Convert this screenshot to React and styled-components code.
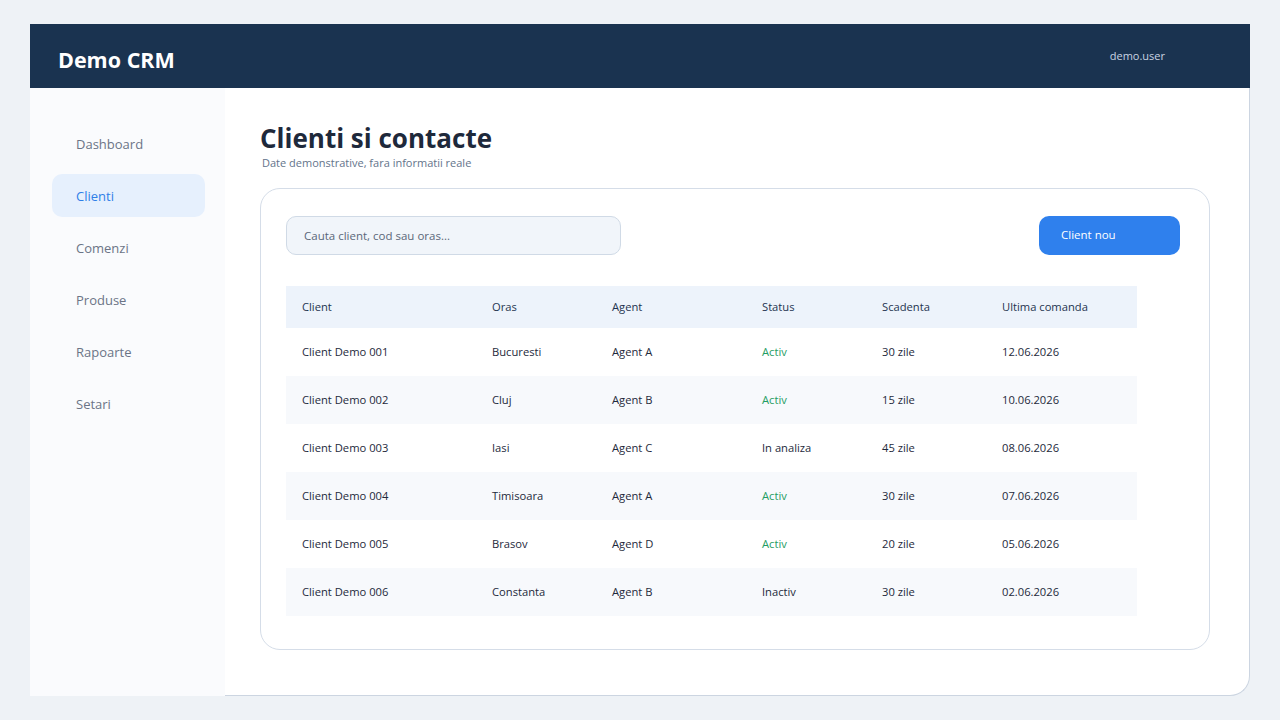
import styled, { createGlobalStyle } from "styled-components";

const GlobalStyle = createGlobalStyle`
    * { box-sizing: border-box; }
    body {
        margin: 0;
        background-color: #eef2f6;
        font-family: "Open Sans", "Noto Sans", sans-serif;
    }
`

const menu = ["Dashboard", "Clienti", "Comenzi", "Produse", "Rapoarte", "Setari"];

const clients = [
    { name: "Client Demo 001", city: "Bucuresti", agent: "Agent A", status: "Activ", due: "30 zile", last: "12.06.2026" },
    { name: "Client Demo 002", city: "Cluj", agent: "Agent B", status: "Activ", due: "15 zile", last: "10.06.2026" },
    { name: "Client Demo 003", city: "Iasi", agent: "Agent C", status: "In analiza", due: "45 zile", last: "08.06.2026" },
    { name: "Client Demo 004", city: "Timisoara", agent: "Agent A", status: "Activ", due: "30 zile", last: "07.06.2026" },
    { name: "Client Demo 005", city: "Brasov", agent: "Agent D", status: "Activ", due: "20 zile", last: "05.06.2026" },
    { name: "Client Demo 006", city: "Constanta", agent: "Agent B", status: "Inactiv", due: "30 zile", last: "02.06.2026" },
];

export default function App(){
    return(
        <>
            <GlobalStyle />
            <Frame>
                <Header>
                    <h1>Demo CRM</h1>
                    <span>demo.user</span>
                </Header>
                <Sidebar>
                    {menu.map(item => (
                        <MenuItem key={item} active={item === "Clienti"}>{item}</MenuItem>
                    ))}
                </Sidebar>
                <Main>
                    <Title>Clienti si contacte</Title>
                    <Subtitle>Date demonstrative, fara informatii reale</Subtitle>
                    <Card>
                        <Toolbar>
                            <Search placeholder="Cauta client, cod sau oras..." />
                            <Button>Client nou</Button>
                        </Toolbar>
                        <Table>
                            <thead>
                                <tr>
                                    <Th width="190">Client</Th>
                                    <Th width="120">Oras</Th>
                                    <Th width="150">Agent</Th>
                                    <Th width="120">Status</Th>
                                    <Th width="120">Scadenta</Th>
                                    <Th>Ultima comanda</Th>
                                </tr>
                            </thead>
                            <tbody>
                                {clients.map(c => (
                                    <Row key={c.name}>
                                        <Td>{c.name}</Td>
                                        <Td>{c.city}</Td>
                                        <Td>{c.agent}</Td>
                                        <Td green={c.status === "Activ"}>{c.status}</Td>
                                        <Td>{c.due}</Td>
                                        <Td>{c.last}</Td>
                                    </Row>
                                ))}
                            </tbody>
                        </Table>
                    </Card>
                </Main>
            </Frame>
        </>
    )
}

const Frame = styled.div`
    margin: 24px 30px;
    width: 1220px;
    height: 672px;
    display: grid;
    grid-template-columns: 195px 1fr;
    grid-template-rows: 64px 1fr;
`

const Header = styled.div`
    grid-column: 1 / 3;
    background-color: #1a3350;
    display: flex;
    align-items: center;
    justify-content: space-between;
    padding: 0 85px 0 28px;

    h1{
        margin: 0;
        font-size: 21.5px;
        font-weight: 700;
        color: #FFFFFF;
        position: relative;
        top: 3px;
    }

    span{
        font-size: 11px;
        color: #c9d4e2;
        position: relative;
        top: -1px;
    }
`

const Sidebar = styled.div`
    background-color: #fafbfd;
    padding: 34px 20px 0 22px;
    display: flex;
    flex-direction: column;
    gap: 9px;
`

const MenuItem = styled.div`
    height: 43px;
    display: flex;
    align-items: center;
    padding-left: 24px;
    border-radius: 10px;
    font-size: 13px;
    color: ${p => p.active ? "#2f7fe8" : "#6b7486"};
    background-color: ${p => p.active ? "#e6f0fd" : "transparent"};
`

const Main = styled.div`
    background-color: #FFFFFF;
    border-right: 1px solid #ccd5e1;
    border-bottom: 1px solid #ccd5e1;
    border-bottom-right-radius: 20px;
    padding: 32px 39px 0 35px;
`

const Title = styled.h2`
    margin: 0;
    font-size: 26px;
    line-height: 36px;
    font-weight: 700;
    color: #1e293b;
`

const Subtitle = styled.p`
    margin: 0 0 18px 2px;
    font-size: 11px;
    line-height: 14px;
    color: #64748b;
`

const Card = styled.div`
    border: 1px solid #d5dde8;
    border-radius: 20px;
    padding: 27px 29px 33px 25px;
`

const Toolbar = styled.div`
    display: flex;
    justify-content: space-between;
    align-items: center;
    margin-bottom: 31px;
`

const Search = styled.input`
    width: 335px;
    height: 39px;
    border: 1px solid #d0dae6;
    border-radius: 10px;
    background-color: #f1f5fa;
    padding: 0 17px;
    font-family: inherit;
    font-size: 11.5px;
    outline: none;

    &::placeholder{
        color: #5b6779;
    }
`

const Button = styled.button`
    width: 141px;
    height: 39px;
    border: none;
    border-radius: 10px;
    background-color: #2f80ed;
    color: #FFFFFF;
    font-family: inherit;
    font-size: 11.5px;
    text-align: left;
    padding: 0 22px 2px;
`

const Table = styled.table`
    width: 851px;
    border-collapse: collapse;
    table-layout: fixed;
    font-size: 11.2px;
`

const Th = styled.th`
    width: ${p => p.width ? p.width + "px" : "auto"};
    height: 42px;
    background-color: #edf3fb;
    text-align: left;
    font-weight: 400;
    color: #1e3350;
    padding: 0 16px 2px;
`

const Row = styled.tr`
    height: 48px;

    &:nth-child(even){
        background-color: #f7f9fc;
    }

    td{
        padding-bottom: 2px;
    }
`

const Td = styled.td`
    padding: 0 16px;
    color: ${p => p.green ? "#1f9d63" : "#1e293b"};
`
